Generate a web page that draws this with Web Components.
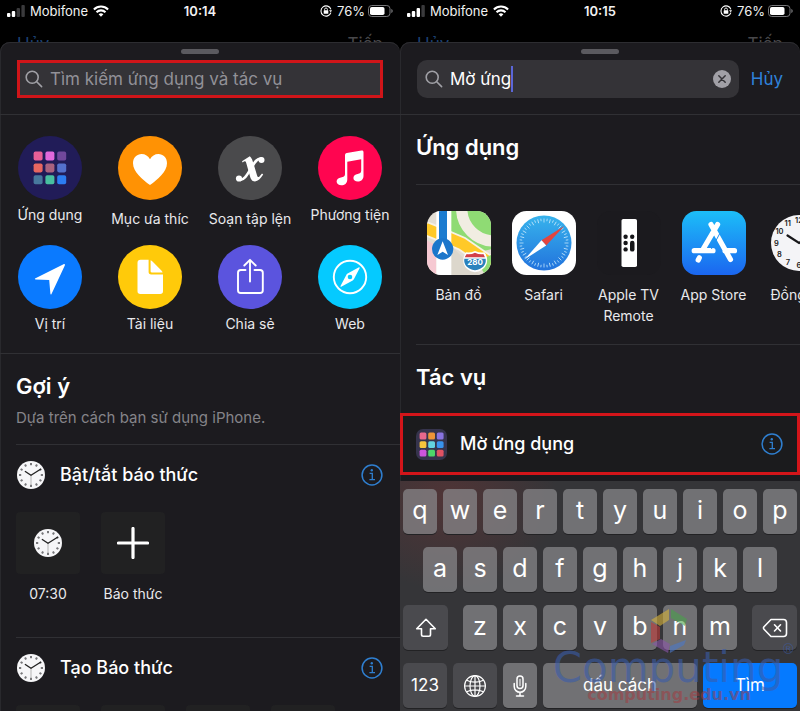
<!DOCTYPE html>
<html lang="vi">
<head>
<meta charset="utf-8">
<meta name="viewport" content="width=device-width, initial-scale=1">
<title>Phím tắt</title>
<style>
  html, body { margin: 0; height: 100%; background: #000; }
  body { font-family: Inter, "Noto Sans", sans-serif; color: #fff; overflow: hidden; }
</style>
</head>
<body>
<shortcut-screens></shortcut-screens>

<script>
const BASE = `<style>
  *, *::before, *::after { box-sizing: border-box; }
  :host { box-sizing: border-box; display: block; }
  :host([hidden]) { display: none; }
  button, input { font: inherit; color: inherit; background: none; border: 0; margin: 0; padding: 0; outline: none; }
  button { cursor: pointer; }
  svg { display: block; }
</style>`;

function define(name, render) {
  customElements.define(name, class extends HTMLElement {
    constructor() {
      super();
      this.attachShadow({ mode: 'open' });
    }
    connectedCallback() {
      this.shadowRoot.innerHTML = BASE + render(this);
    }
  });
}

const range = n => Array.from({ length: n }, (_, i) => i);

function grid(colors, x0, pitch, size, r) {
  return colors.map((c, i) =>
    `<rect x="${x0 + (i % 3) * pitch}" y="${x0 + Math.floor(i / 3) * pitch}" width="${size}" height="${size}" rx="${r}" fill="${c}"/>`).join('');
}

const clockNumbers = range(12).map(i => {
  const a = (i + 1) * Math.PI / 6;
  return `<text x="${(32 + Math.sin(a) * 22.5).toFixed(1)}" y="${(34.6 - Math.cos(a) * 22.5).toFixed(1)}">${i + 1}</text>`;
}).join('');

const clockMarks = range(12).map(i =>
  `<rect x="13" y="2" width="2" height="2.2" fill="#77777a" transform="rotate(${i * 30} 14 14)"/>`).join('');

const safariTicks = range(48).map(i =>
  `<path d="M32 7.5V${i % 2 ? 10 : 11.5}" transform="rotate(${i * 7.5} 32 32)"/>`).join('');

const ICONS = {
  search: ['0 0 18 18', `<g fill="none" stroke="#a0a0a6" stroke-width="1.6" stroke-linecap="round"><circle cx="7.2" cy="7.2" r="6"/><path d="M11.7 11.7L16.6 16.6"/></g>`],
  clear: ['0 0 18 18', `<circle cx="9" cy="9" r="9" fill="#a1a0a6"/><path d="M5.8 5.8l6.4 6.4M12.2 5.8l-6.4 6.4" stroke="#343337" stroke-width="1.5" stroke-linecap="round"/>`],
  signal2: ['0 0 18 12', `<g fill="#fff"><rect x="0" y="8" width="3.4" height="4" rx="1"/><rect x="4.8" y="6" width="3.4" height="6" rx="1"/></g><g fill="#3a3a3c"><rect x="9.6" y="3" width="3.4" height="9" rx="1"/><rect x="14.4" y="0" width="3.4" height="12" rx="1"/></g>`],
  signal3: ['0 0 18 12', `<g fill="#fff"><rect x="0" y="8" width="3.4" height="4" rx="1"/><rect x="4.8" y="6" width="3.4" height="6" rx="1"/><rect x="9.6" y="3" width="3.4" height="9" rx="1"/></g><rect x="14.4" y="0" width="3.4" height="12" rx="1" fill="#3a3a3c"/>`],
  wifi: ['0 0 16 12', `<g fill="none" stroke="#fff" stroke-width="2.1"><path d="M.9 4.4a10.2 10.2 0 0 1 14.2 0"/><path d="M3.5 7.2a6.5 6.5 0 0 1 9 0"/></g><path d="M8 11.7L5.6 9.3a3.5 3.5 0 0 1 4.8 0z" fill="#fff"/>`],
  lock: ['0 0 12 12', `<path d="M10.9 4.4A5.1 5.1 0 1 0 10.9 7.6" fill="none" stroke="#fff" stroke-width="1.1"/><path d="M9 5.2h3l-1.2 2z" fill="#fff"/><rect x="3.7" y="5.3" width="4.6" height="3.5" rx=".6" fill="#fff"/><path d="M4.6 5.5V4.4a1.4 1.4 0 0 1 2.8 0v1.1" fill="none" stroke="#fff" stroke-width=".9"/>`],
  battery: ['0 0 25 12', `<rect x=".5" y=".5" width="21.5" height="11" rx="3.2" fill="none" stroke="#77777a"/><rect x="2" y="2" width="14.5" height="8" rx="1.8" fill="#fff"/><path d="M23.3 4v4c.9-.3 1.4-1 1.4-2s-.5-1.700-1.400-2z" fill="#77777a"/>`],
  apps: ['0 0 64 64', `<circle cx="32" cy="32" r="32" fill="#211c58"/>` + grid(['#e85f97', '#e268dc', '#70489c', '#e76660', '#a9627f', '#5471cc', '#47789d', '#48bfa0', '#2c7df2'], 15.6, 11.8, 9, 1.8)],
  heart: ['0 0 64 64', `<circle cx="32" cy="32" r="32" fill="#ff9204"/><path d="M32 49C24.500 43.500 15 35.800 15 27.200C15 21.500 19 18 23.600 18C27.200 18 30.300 20 32 23.200C33.700 20 36.800 18 40.400 18C45 18 49 21.500 49 27.200C49 35.800 39.500 43.500 32 49z" fill="#fff"/>`],
  script: ['0 0 64 64', `<circle cx="32" cy="32" r="32" fill="#4a4a4c"/><path d="M24 25.300L31.800 20.200C33.800 22 34.700 24.800 35.600 27.800L39 39.300C39.600 41.500 40.600 41.800 42.300 39.600L44 37.600L45.200 38.600C42.600 42.800 40 45.400 37 45.400C33.600 45.400 32.600 42.600 31.700 39.200L28.300 27.200C27.600 24.900 26.700 24.700 24.700 26.500z" fill="#fff"/><path d="M43.500 22.600C39 21.500 36 27.500 32.800 32.800C28.800 39.500 25.500 45.200 21 43.600" fill="none" stroke="#fff" stroke-width="2.600" stroke-linecap="round"/><circle cx="43.500" cy="23.900" r="3" fill="#fff"/><circle cx="21" cy="42.500" r="3.100" fill="#fff"/>`],
  music: ['0 0 64 64', `<circle cx="32" cy="32" r="32" fill="#ff0550"/><path d="M27 19.200C27 17.900 27.600 17.200 28.800 16.900L43.500 14.500C44.800 14.300 45.500 14.900 45.500 16.200V39.800C45.500 43.800 42.800 45.600 39.700 45.600C37.200 45.600 35.400 44.200 35.400 42C35.400 39.600 37.200 38.400 39.600 37.900C41.900 37.400 43.200 37 43.200 34.800V23.200L29.300 25.800V43.200C29.300 47.600 26.500 49.200 23.400 49.200C20.800 49.200 18.600 47.800 18.600 45.500C18.600 43.100 20.600 41.900 23 41.400C25.500 40.900 27 40.500 27 38.300z" fill="#fff"/>`],
  location: ['0 0 64 64', `<circle cx="32" cy="32" r="32" fill="#0a7aff"/><path d="M17.500 33.300L45.500 19.200C46.500 18.700 47.300 19.400 46.800 20.500L33.500 49C33.100 49.900 32.500 49.800 32.400 48.800L31.200 35L17.700 34.600C16.700 34.500 16.600 33.700 17.500 33.300z" fill="#fff"/>`],
  doc: ['0 0 64 64', `<circle cx="32" cy="32" r="32" fill="#ffca0a"/><path d="M22.500 14.700H30.600V27C30.600 28.600 31.500 29.500 33.200 29.500H45V46.200C45 48 44 49 42.200 49H22.300C20.500 49 19.500 48 19.500 46.200V17.700C19.500 15.800 20.600 14.700 22.500 14.700z" fill="#fff"/><path d="M32.600 15.200C33.300 15.400 33.900 15.800 34.500 16.400L43.400 25.400C44 26 44.400 26.600 44.600 27.400H33.700C33 27.400 32.600 27.100 32.600 26.300z" fill="#fff"/>`],
  share: ['0 0 64 64', `<circle cx="32" cy="32" r="32" fill="#5b54de"/><g fill="none" stroke="#fff" stroke-width="1.900" stroke-linecap="round" stroke-linejoin="round"><path d="M27.500 25H22.800Q20 25 20 27.800V45.200Q20 48 22.800 48H42Q44.800 48 44.800 45.200V27.800Q44.800 25 42 25H36.500"/><path d="M32 36.500V15M26.300 20.500L32 14.800L37.700 20.500"/></g>`],
  compass: ['0 0 64 64', `<circle cx="32" cy="32" r="32" fill="#05caff"/><circle cx="32" cy="32" r="16.200" fill="none" stroke="#fff" stroke-width="1.900"/><path fill-rule="evenodd" d="M41 22.200C41.500 22 41.900 22.400 41.700 22.900L36 34C35.700 34.600 35.300 35.100 34.700 35.400L23.200 41.800C22.600 42 22.200 41.700 22.500 41.100L28.300 29.900C28.600 29.300 29 28.900 29.600 28.600zM32 29.700A2.300 2.300 0 1 0 32 34.300A2.300 2.300 0 1 0 32 29.700z" fill="#fff"/>`],
  info: ['0 0 22 22', `<circle cx="11" cy="11" r="9.900" fill="none" stroke="#2f7fd0" stroke-width="1.500"/><circle cx="10.800" cy="6.300" r="1.200" fill="#2f7fd0"/><path d="M8.600 9.300H11.300V15.500M8.400 15.700H14" fill="none" stroke="#2f7fd0" stroke-width="1.300"/>`],
  clock: ['0 0 28 28', `<circle cx="14" cy="14" r="14" fill="#f6f6f8"/>${clockMarks}<path d="M14 14V24" stroke="#999" stroke-width=".7"/><path d="M8.300 10.500L14 14.300L23.500 8.300" fill="none" stroke="#222" stroke-width="1.300" stroke-linecap="round"/>`],
  plus: ['0 0 32 32', `<path d="M16 1.500V30.500M1.500 16H30.500" stroke="#fff" stroke-width="3.200" stroke-linecap="round"/>`],
  maps: ['0 0 64 64', `<clipPath id="m"><rect width="192" height="192" rx="43"/></clipPath><g transform="scale(.33333)"><g clip-path="url(#m)"><path fill="#e3ded4" d="M0 0h192v192H0z"/><path fill="#8fdb74" d="M70 0H192V115L160 122L70 78z"/><path fill="#f6c9d2" d="M0 88L28 104V192H0z"/><path d="M-5 52L25 64L105 98L192 158" fill="none" stroke="#f7f2e6" stroke-width="44"/><path d="M-5 52L25 64L105 98L192 158" fill="none" stroke="#ffc928" stroke-width="33"/><path d="M72 104L160 192H72z" fill="#dcd7cc"/><path fill="#8fdb74" d="M150 152L192 132V192H175z"/><circle cx="202" cy="-8" r="98" fill="none" stroke="#f1ede2" stroke-width="34"/><path d="M28 0H73V192H28z" fill="#fff"/><path d="M36 0H60V105H36z" fill="#1c7cd0"/><circle cx="47" cy="114" r="32" fill="#1b76cb"/><path d="M47 91L63 132L47 122L31 132z" fill="#fff"/><path d="M117 124Q130 126 144 120Q159 126 172 124Q184 138 179 158Q172 178 144 184Q116 178 110 158Q106 138 117 124z" fill="#fff"/><path d="M119 129Q132 131 144 125Q157 131 169 129L174 139H113z" fill="#d3404a"/><path d="M112 143H176Q180 170 144 178Q108 170 112 143z" fill="#2a82bd"/><text x="144" y="163" text-anchor="middle" font-family="Inter, sans-serif" font-size="24" font-weight="700" fill="#fff">280</text></g></g>`],
  safari: ['0 0 64 64', `<defs><linearGradient id="s" x2="0" y2="1"><stop stop-color="#37b3ec"/><stop offset="1" stop-color="#2273dd"/></linearGradient></defs><rect width="64" height="64" rx="14.500" fill="#fff"/><circle cx="32" cy="32" r="27.500" fill="url(#s)"/><g stroke="#c3e6fb" stroke-width=".8" fill="none">${safariTicks}</g><path d="M52.300 15L29.500 29.200L34.200 34.400z" fill="#e3453f"/><path d="M12.500 48.500L29.500 29.200L34.200 34.400z" fill="#fff"/>`],
  remote: ['0 0 64 64', `<rect width="64" height="64" rx="14" fill="#1b1a1e"/><rect x="24.500" y="8" width="15.500" height="48" rx="1.800" fill="#fff"/><g fill="#17171a"><circle cx="28.600" cy="25.700" r="2.200"/><circle cx="35.200" cy="25.700" r="2.200"/><circle cx="28.600" cy="32" r="2.200"/><circle cx="28.600" cy="38.400" r="2.200"/><rect x="33" y="29.800" width="4.500" height="10.800" rx="2.200"/></g>`],
  store: ['0 0 64 64', `<defs><linearGradient id="a" x2="0" y2="1"><stop stop-color="#1cbef8"/><stop offset="1" stop-color="#1b66f0"/></linearGradient></defs><rect width="64" height="64" rx="14.500" fill="url(#a)"/><g stroke="#fff" stroke-width="5.200" stroke-linecap="round"><path d="M35.600 13.500L21.500 37.500M29 13.500L48.500 48.500M12.200 39.700H31M43 39.700H52.500M17.300 46.800L16.200 49"/></g><path d="M37.800 22.500L29.400 38" stroke="#1c8ff4" stroke-width="1"/>`],
  worldclock: ['0 0 64 64', `<circle cx="32" cy="32" r="28" fill="#f4f4f7"/><g font-family="Inter, sans-serif" font-size="7.500" font-weight="600" fill="#222" text-anchor="middle">${clockNumbers}</g><path d="M20.500 24.500L32 32L46 22" fill="none" stroke="#17171a" stroke-width="2.200" stroke-linecap="round"/>`],
  launcher: ['0 0 31 31', `<rect width="31" height="31" rx="7" fill="#36344d"/>` + grid(['#e8688d', '#ee9437', '#8973e0', '#f7c43c', '#63d3df', '#3893ee', '#cc55dc', '#4dd66a', '#e05263'], 3.600, 8.600, 6.800, 1.500)],
  shift: ['0 0 22 20', `<path d="M11 1.300L20.300 10.700H15.500V16.600Q15.500 18.300 13.800 18.300H8.200Q6.500 18.300 6.500 16.600V10.700H1.700z" fill="none" stroke="#fff" stroke-width="1.600" stroke-linejoin="round"/>`],
  backspace: ['0 0 26 20', `<g fill="none" stroke="#fff" stroke-width="1.600" stroke-linecap="round" stroke-linejoin="round"><path d="M9 1.500H21.500Q24.500 1.500 24.500 4.500V15.500Q24.500 18.500 21.500 18.500H9L2 11.200Q1 10 2 8.800z"/><path d="M12.500 6.800L18.500 13M18.500 6.800L12.500 13"/></g>`],
  globe: ['0 0 24 24', `<g fill="none" stroke="#fff" stroke-width="1.200"><circle cx="12" cy="12" r="10.400"/><ellipse cx="12" cy="12" rx="5" ry="10.400"/><path d="M12 1.600V22.400M1.600 12H22.400M3.500 6.200Q12 10 20.500 6.200M3.500 17.800Q12 14 20.500 17.800"/></g>`],
  mic: ['0 0 14 22', `<rect x="4" y="1" width="6" height="12.500" rx="3" fill="none" stroke="#fff" stroke-width="1.500"/><path d="M1.200 8.500V11.500A5.800 5.800 0 0 0 12.800 11.500V8.500M7 17.300V21M3.500 21H10.500" fill="none" stroke="#fff" stroke-width="1.500" stroke-linecap="round"/><path d="M7 4V11" stroke="#fff" stroke-width="1"/>`],
  brand: ['0 0 36 44', `<path d="M0 11L18 0V11L9 17z" fill="#d8b43c"/><path d="M20 0L36 10L34 17L20 9z" fill="#4aa04c"/><path d="M0 13L9 18V30L0 34z" fill="#c03a38"/><path d="M1 35L10 30L19 35L17 44z" fill="#8a55a8"/><path d="M19 37L35 31L33 36L19 44z" fill="#4b78c8"/>`]
};

define('ui-icon', el => {
  const [box, body] = ICONS[el.getAttribute('name')];
  const [, , w, h] = box.split(' ');
  return `<style>
    :host { flex: none; width: ${w}px; height: ${h}px; }
    svg { width: 100%; height: 100%; }
  </style><svg viewBox="${box}" aria-hidden="true">${body}</svg>`;
});

define('status-bar', el => `<style>
  :host { display: grid; grid-template-columns: 1fr auto 1fr; align-items: center; height: 22px; padding: 0 7px; font-size: 13px; line-height: 22px; color: #f2f2f2; }
  .side { display: flex; align-items: center; gap: 5px; }
  .end { justify-content: flex-end; gap: 3px; }
  .end ui-icon:first-child { margin-right: 2px; }
  time { font-weight: 600; }
</style>
<div class="side"><ui-icon name="${el.getAttribute('signal')}"></ui-icon><span>Mobifone</span><ui-icon name="wifi"></ui-icon></div>
<time>${el.getAttribute('time')}</time>
<div class="side end"><ui-icon name="lock"></ui-icon><span>76%</span><ui-icon name="battery"></ui-icon></div>`);

define('phone-screen', el => `<style>
  :host { display: flex; flex-direction: column; height: 100vh; min-width: 0; overflow: hidden; background: #000; }
  .behind { display: flex; justify-content: space-between; flex: none; height: 20px; padding: 11px 17px 0; overflow: hidden; font-size: 17px; line-height: 22px; color: #48484b; }
  .behind span:first-child { color: #1c4274; }
  .sheet { flex: 1; min-height: 0; display: flex; flex-direction: column; overflow: hidden; background: #1c1b1f; border-radius: 10px 10px 0 0; box-shadow: inset 0 1px #2d2d31, inset 1px 0 #29292d; }
  .head { flex: none; padding: 7px 17px 16px; border-bottom: 1px solid #303034; }
  .handle { width: 38px; height: 5px; margin: 0 auto 6px; border-radius: 3px; background: #5b5a5f; }
  .body { flex: 1; min-height: 0; overflow: hidden; }
</style>
<status-bar time="${el.getAttribute('time')}" signal="${el.getAttribute('signal')}"></status-bar>
<div class="behind"><span>Hủy</span><span>Tiếp</span></div>
<main class="sheet">
  <div class="head"><div class="handle"></div><slot name="search"></slot></div>
  <div class="body"><slot></slot></div>
  <slot name="keyboard"></slot>
</main>`);

define('search-field', el => {
  const value = el.getAttribute('value') || '';
  return `<style>
  :host { display: flex; align-items: center; gap: 12px; }
  label { flex: 1; min-width: 0; display: flex; align-items: center; height: 38px; padding: 0 8px; border-radius: 10px; background: #343337; }
  :host([marked]) label { border: 3px solid #d01519; border-radius: 0; padding: 0 5px; }
  label > ui-icon { margin-right: 7px; }
  input { min-width: 0; flex: 1; height: 30px; font-size: 17px; line-height: 30px; }
  input::placeholder { color: #929197; opacity: 1; }
  :host([value]) input { flex: none; field-sizing: content; }
  .caret { width: 2px; height: 26px; background: #5b66d6; }
  .clear { margin-left: auto; }
  .cancel { font-size: 17px; line-height: 38px; color: #2f82da; }
</style>
<label><ui-icon name="search"></ui-icon><input type="text" aria-label="Tìm kiếm" placeholder="${value ? '' : 'Tìm kiếm ứng dụng và tác vụ'}" value="${value}">${value ? '<i class="caret"></i><button class="clear" type="button" aria-label="Xóa"><ui-icon name="clear"></ui-icon></button>' : ''}</label>
${value ? '<button class="cancel" type="button">Hủy</button>' : ''}`;
});

define('category-grid', () => `<style>
  :host { display: grid; grid-template-columns: repeat(4, 1fr); row-gap: 16px; padding: 21px 0 19px; border-bottom: 1px solid #303034; }
</style><slot></slot>`);

/* An icon above a centred caption; used for categories, apps and shortcuts. */
define('icon-tile', el => `<style>
  :host { min-width: 0; }
  button { display: flex; flex-direction: column; align-items: center; gap: 5px; width: 100%; font-size: 14px; line-height: 20px; color: #e9e9ec; }
  span { white-space: nowrap; }
  :host([kind=low]) button { gap: 9px; }
  :host([kind=app]) { flex: 0 0 85px; }
  :host([kind=app]) button { gap: 9px; line-height: 21px; }
  :host([kind=app]) span { white-space: normal; }
  :host([kind=box]) { flex: 0 0 64px; }
  :host([kind=box]) button { gap: 10px; }
  .box { display: grid; place-items: center; width: 64px; height: 62px; border-radius: 4px; background: #212122; }
</style>
<button type="button">${el.getAttribute('kind') === 'box'
  ? `<div class="box">${el.getAttribute('icon') ? `<ui-icon name="${el.getAttribute('icon')}"></ui-icon>` : ''}</div>`
  : `<ui-icon name="${el.getAttribute('icon')}"></ui-icon>`}<span><slot></slot></span></button>`);

define('section-title', () => `<style>
  :host { padding: 18px 16px 0; }
  h2 { margin: 0; font-size: 22px; line-height: 28px; font-weight: 600; }
  .sub { display: none; margin-top: 6px; font-size: 15px; line-height: 24px; color: #858489; }
  :host([sub]) .sub { display: block; }
  .rule { height: 24px; margin-right: -16px; border-bottom: 1px solid #303034; }
  :host([sub]) .rule { height: 15px; }
  :host([plain]) .rule { height: 22px; border: 0; }
</style><h2><slot></slot></h2><div class="sub"><slot name="sub"></slot></div><div class="rule"></div>`);

define('action-row', el => `<style>
  :host { display: flex; align-items: center; height: 60px; padding: 0 17px; }
  :host([marked]) { height: 62px; border: 3px solid #d3151a; padding: 0 14px 0 13px; background: #1b1b1d; }
  .icon { flex: none; display: grid; place-items: center start; width: 43px; }
  :host([marked]) .icon { width: 44px; }
  strong { flex: 1; font-size: 18px; line-height: 24px; font-weight: 500; }
</style>
<div class="icon"><ui-icon name="${el.getAttribute('icon')}"></ui-icon></div>
<strong><slot></slot></strong>
<button type="button" aria-label="Thông tin"><ui-icon name="info"></ui-icon></button>`);

define('tile-strip', () => `<style>
  :host { padding-left: 16px; }
  .strip { display: flex; gap: 21px; padding: 7px 0 33px; border-bottom: 1px solid #303034; overflow: hidden; }
  :host([kind=apps]) .strip { gap: 0; padding: 26px 0 18px; }
</style><div class="strip"><slot></slot></div>`);

const letterKeys = s => [...s].map(c => `<button class="key" type="button">${c}</button>`).join('');

define('touch-keyboard', () => `<style>
  :host { position: relative; flex: none; padding: 8px 3px 3px; background: radial-gradient(ellipse 110px 90px at 12% 8%, #503436, transparent), #353538; }
  .keys { display: grid; gap: 13px; }
  .row { display: flex; gap: 6px; }
  .inset { padding: 0 20px; }
  .wide { gap: 15px; }
  .letters { flex: 274 0 0; display: flex; gap: 6px; }
  .key { flex: 34 0 0; min-width: 0; height: 45px; display: grid; place-items: center; border-radius: 5px; background: rgba(139, 139, 142, .7); box-shadow: 0 1px #222224; font-size: 25px; line-height: 42px; padding-bottom: 3px; }
  .side, .mode { background: #4a4a4e; padding: 0; }
  .side { flex-grow: 45; }
  .mode { flex-grow: 44; }
  .mic { padding: 0; }
  .text { font-size: 17px; line-height: 45px; padding: 0; }
  .space { flex-grow: 154; }
  .go { flex-grow: 94; background: #057aff; }
  .mark { position: absolute; right: 6px; bottom: 3px; width: 250px; height: 99px; pointer-events: none; }
</style>
<div class="keys">
  <div class="row">${letterKeys('qwertyuiop')}</div>
  <div class="row inset">${letterKeys('asdfghjkl')}</div>
  <div class="row wide">
    <button class="key side" type="button" aria-label="Shift"><ui-icon name="shift"></ui-icon></button>
    <div class="letters">${letterKeys('zxcvbnm')}</div>
    <button class="key side" type="button" aria-label="Xóa lùi"><ui-icon name="backspace"></ui-icon></button>
  </div>
  <div class="row">
    <button class="key mode text" type="button">123</button>
    <button class="key mode" type="button" aria-label="Ngôn ngữ"><ui-icon name="globe"></ui-icon></button>
    <button class="key mic" type="button" aria-label="Đọc"><ui-icon name="mic"></ui-icon></button>
    <button class="key text space" type="button">dấu cách</button>
    <button class="key text go" type="button">Tìm</button>
  </div>
</div>
<brand-mark class="mark"></brand-mark>`);

define('brand-mark', () => `<style>
  :host { display: grid; justify-items: center; align-content: start; font-family: "DejaVu Sans", sans-serif; }
  ui-icon { opacity: .6; }
  .name { display: flex; align-items: flex-start; margin-top: -5px; line-height: 40px; font-size: 42px; color: rgba(58, 92, 170, .6); }
  sup { font-size: 14px; line-height: 14px; margin: -6px -10px 0 -2px; }
  .site { margin-top: -3px; font-size: 16px; line-height: 20px; font-weight: 700; color: rgba(165, 55, 60, .5); }
</style>
<ui-icon name="brand"></ui-icon>
<div class="name">Computing<sup>®</sup></div>
<div class="site">computing.edu.vn</div>`);

define('shortcut-screens', () => `<style>
  :host { display: grid; grid-template-columns: 1fr 1fr; }
</style>
<phone-screen time="10:14" signal="signal2">
  <search-field slot="search" marked></search-field>
  <category-grid>
    <icon-tile icon="apps">Ứng dụng</icon-tile>
    <icon-tile icon="heart" kind="low">Mục ưa thíc</icon-tile>
    <icon-tile icon="script" kind="low">Soạn tập lện</icon-tile>
    <icon-tile icon="music">Phương tiện</icon-tile>
    <icon-tile icon="location">Vị trí</icon-tile>
    <icon-tile icon="doc">Tài liệu</icon-tile>
    <icon-tile icon="share">Chia sẻ</icon-tile>
    <icon-tile icon="compass">Web</icon-tile>
  </category-grid>
  <section-title sub>Gợi ý<span slot="sub">Dựa trên cách bạn sử dụng iPhone.</span></section-title>
  <action-row icon="clock">Bật/tắt báo thức</action-row>
  <tile-strip>
    <icon-tile kind="box" icon="clock">07:30</icon-tile>
    <icon-tile kind="box" icon="plus">Báo thức</icon-tile>
  </tile-strip>
  <action-row icon="clock">Tạo Báo thức</action-row>
  <tile-strip>
    <icon-tile kind="box"></icon-tile><icon-tile kind="box"></icon-tile><icon-tile kind="box"></icon-tile><icon-tile kind="box"></icon-tile>
  </tile-strip>
</phone-screen>
<phone-screen time="10:15" signal="signal3">
  <search-field slot="search" value="Mờ ứng"></search-field>
  <section-title>Ứng dụng</section-title>
  <tile-strip kind="apps">
    <icon-tile kind="app" icon="maps">Bản đồ</icon-tile>
    <icon-tile kind="app" icon="safari">Safari</icon-tile>
    <icon-tile kind="app" icon="remote">Apple TV Remote</icon-tile>
    <icon-tile kind="app" icon="store">App Store</icon-tile>
    <icon-tile kind="app" icon="worldclock">Đồng hồ</icon-tile>
  </tile-strip>
  <section-title plain>Tác vụ</section-title>
  <action-row icon="launcher" marked>Mờ ứng dụng</action-row>
  <touch-keyboard slot="keyboard"></touch-keyboard>
</phone-screen>`);
</script>
</body>
</html>
